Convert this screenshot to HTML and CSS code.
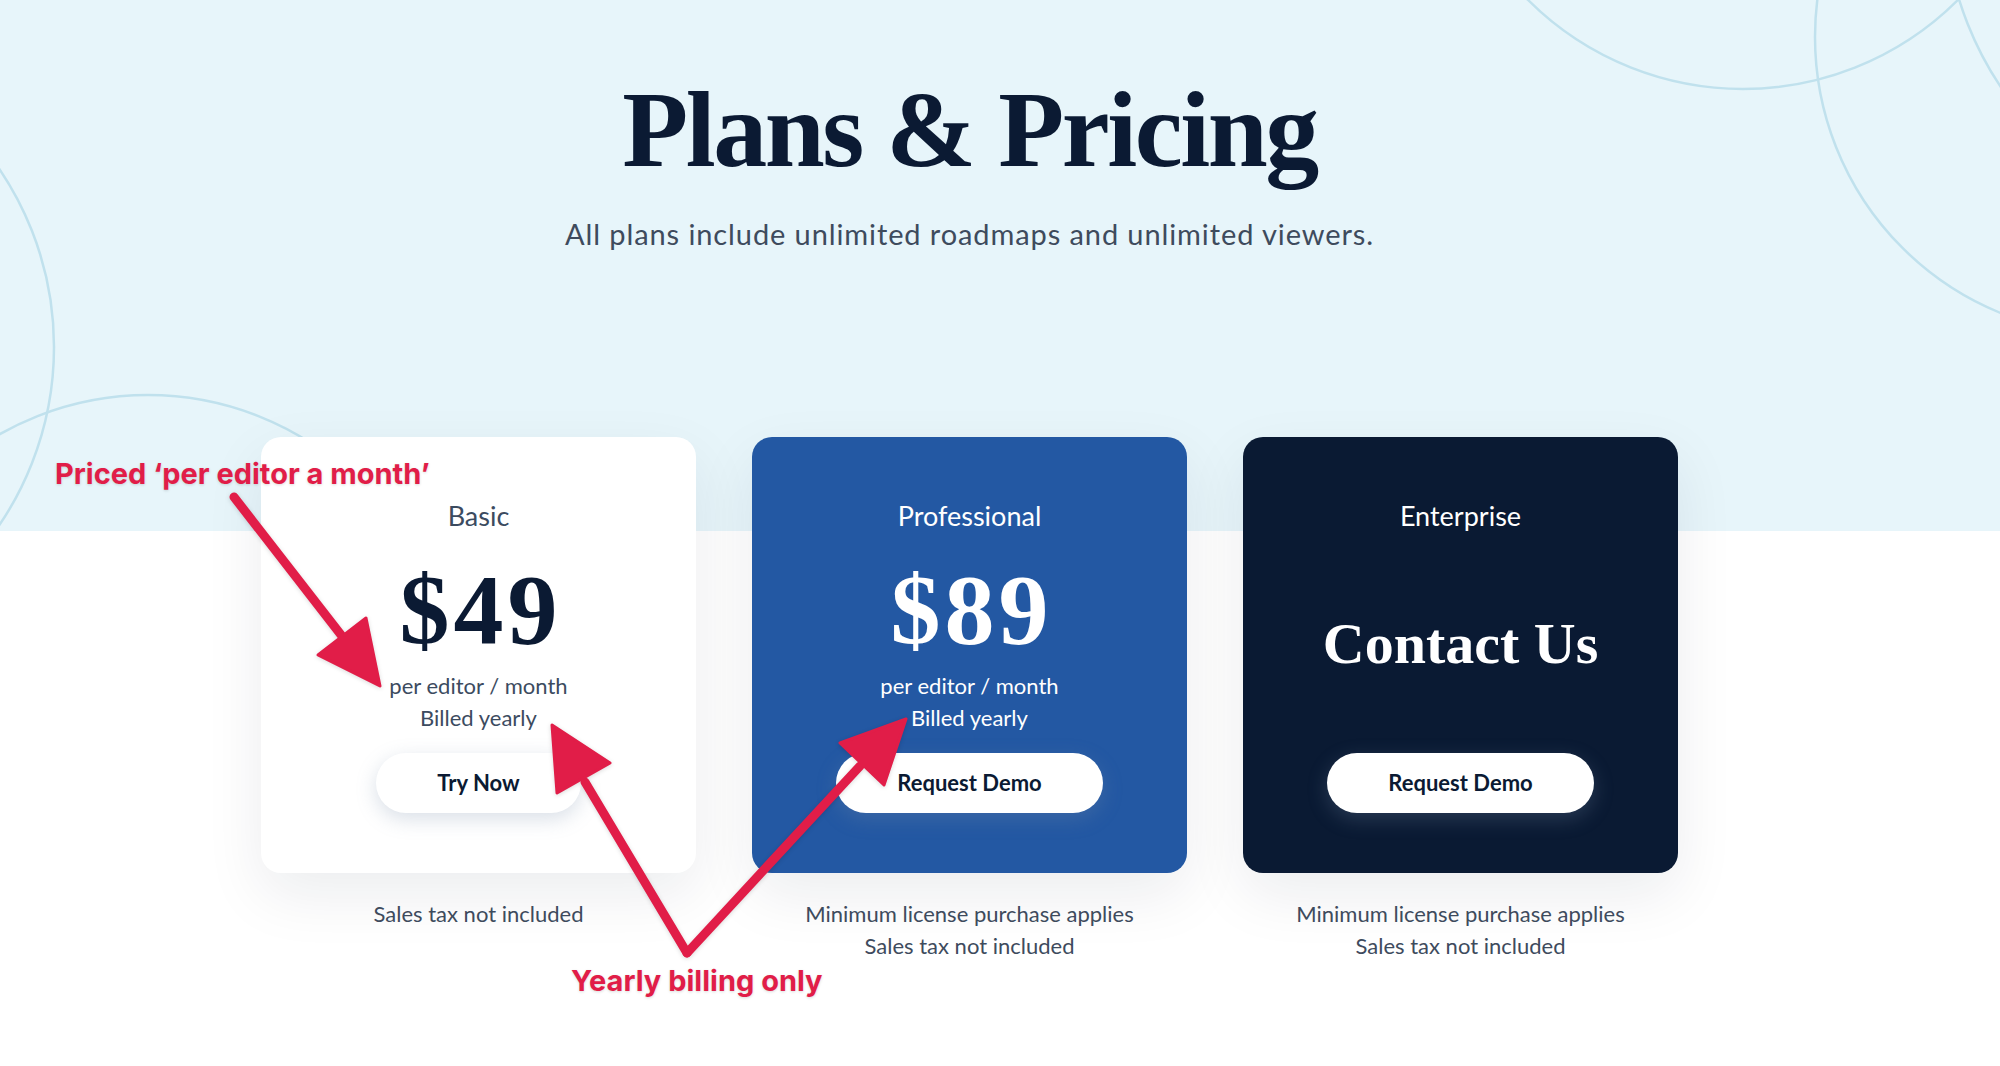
FILE: index.html
```html
<!DOCTYPE html>
<html lang="en">
<head>
    <meta charset="UTF-8">
    <meta name="viewport" content="width=device-width, initial-scale=1.0">
    <title>Plans &amp; Pricing</title>
    <link rel="stylesheet" href="styles.css">
</head>
<body>

    <main class="pricing">
        <!-- decorative rings behind the header -->
        <svg class="rings" width="2000" height="531" viewBox="0 0 2000 531" aria-hidden="true">
            <circle cx="1743" cy="-215" r="304"/>
            <circle cx="2113" cy="37" r="298"/>
            <circle cx="2280" cy="-100" r="336"/>
            <circle cx="-263" cy="347" r="317"/>
            <circle cx="148" cy="695" r="300"/>
        </svg>

        <header class="intro">
            <h1>Plans &amp; Pricing</h1>
            <p class="lead">All plans include unlimited roadmaps and unlimited viewers.</p>
        </header>

        <section class="plans">
            <div class="plan">
                <div class="card card-light">
                    <div class="plan-name">Basic</div>
                    <div class="price-block">
                        <div class="price">$49</div>
                        <div class="price-note">per editor / month<br>Billed yearly</div>
                    </div>
                    <button class="btn">Try Now</button>
                </div>
                <p class="fine-print">Sales tax not included</p>
            </div>

            <div class="plan">
                <div class="card card-blue">
                    <div class="plan-name">Professional</div>
                    <div class="price-block">
                        <div class="price">$89</div>
                        <div class="price-note">per editor / month<br>Billed yearly</div>
                    </div>
                    <button class="btn">Request Demo</button>
                </div>
                <p class="fine-print">Minimum license purchase applies<br>Sales tax not included</p>
            </div>

            <div class="plan">
                <div class="card card-dark">
                    <div class="plan-name">Enterprise</div>
                    <div class="price-block contact">
                        <div class="contact-us">Contact Us</div>
                    </div>
                    <button class="btn">Request Demo</button>
                </div>
                <p class="fine-print">Minimum license purchase applies<br>Sales tax not included</p>
            </div>
        </section>

        <!-- red call-outs drawn over the page -->
        <div class="notes">
            <svg class="arrows" width="2000" height="1066" viewBox="0 0 2000 1066" aria-hidden="true">
                <line x1="234" y1="497" x2="345" y2="640"/>
                <polygon points="380,686 318,655 366,618"/>
                <line x1="687" y1="953" x2="585" y2="782"/>
                <polygon points="552,725 610,763 557,793"/>
                <line x1="687" y1="953" x2="860" y2="766"/>
                <polygon points="906,719 840,743 884,785"/>
            </svg>
            <span class="note note-price">Priced ‘per editor a month’</span>
            <span class="note note-billing">Yearly billing only</span>
        </div>
    </main>

</body>
</html>
```

FILE: styles.css
```css
*, *::before, *::after {
  box-sizing: border-box;
}

body {
  margin: 0;
  background-color: #fff;
  color: #0b1a33;
  font-family: 'Lato', 'Noto Sans', sans-serif;
}

.pricing {
  position: relative;
  min-height: 1066px;
  padding-right: 61px;
  overflow: hidden;
  background: linear-gradient(to bottom, #e7f5fa 531px, #fff 531px);
}

.rings {
  position: absolute;
  top: 0;
  left: 0;
}

.rings circle {
  fill: none;
  stroke: #c0e1ed;
  stroke-width: 2.5;
}

.intro {
  position: relative;
  padding-top: 76px;
  text-align: center;
}

h1 {
  margin: 0;
  font: 700 108px/108px 'Liberation Serif', serif;
  letter-spacing: -2.5px;
  color: #0b1a33;
}

.lead {
  margin: 33px 0 0;
  font-size: 29px;
  line-height: 34px;
  letter-spacing: 0.9px;
  color: #3e4b5d;
}

.plans {
  position: relative;
  display: flex;
  justify-content: center;
  gap: 56px;
  margin-top: 186px;
}

.plan {
  width: 435px;
  text-align: center;
}

.card {
  display: flex;
  flex-direction: column;
  align-items: center;
  height: 436px;
  padding: 62px 0 60px;
  border-radius: 20px;
  box-shadow: 0 22px 60px rgba(11, 26, 51, 0.08);
}

.card-light {
  background-color: #fff;
  color: #3c4b5f;
}

.card-blue {
  background-color: #2358a3;
  color: #fff;
}

.card-dark {
  background-color: #0a1a33;
  color: #fff;
}

.plan-name {
  font-size: 27px;
  line-height: 34px;
}

.price-block {
  display: flex;
  flex-direction: column;
  align-items: center;
  height: 173px;
  margin-top: 28px;
}

.price-block.contact {
  justify-content: center;
  padding-bottom: 8px;
}

.price {
  margin-right: -4px;
  font: 700 100px/98px 'Liberation Serif', serif;
  letter-spacing: 4px;
}

.card-light .price {
  color: #0b1a33;
}

.price-note {
  margin-top: 11px;
  font-size: 22px;
  line-height: 32px;
}

.contact-us {
  font: 700 58px/58px 'Liberation Serif', serif;
}

.btn {
  height: 60px;
  margin-top: 19px;
  padding: 0 61px;
  border: none;
  border-radius: 30px;
  background-color: #fff;
  color: #0b1a33;
  font: 700 22px/60px 'Lato', sans-serif;
  box-shadow: 0 6px 20px rgba(120, 140, 170, 0.28);
  cursor: pointer;
  appearance: none;
}

.fine-print {
  margin: 25px 0 0;
  font-size: 22px;
  line-height: 32px;
  color: #3e4b5d;
}

.notes {
  position: absolute;
  top: 0;
  left: 0;
  width: 2000px;
  height: 1066px;
  pointer-events: none;
}

.arrows {
  position: absolute;
  top: 0;
  left: 0;
  filter: drop-shadow(0 1px 2px rgba(0, 0, 0, 0.15));
}

.arrows line {
  stroke: #e11d48;
  stroke-width: 9;
  stroke-linecap: round;
}

.arrows polygon {
  fill: #e11d48;
  stroke: #e11d48;
  stroke-width: 3;
  stroke-linejoin: round;
}

.note {
  position: absolute;
  font: 700 29px/35px 'Inter', sans-serif;
  color: #e11d48;
  white-space: nowrap;
  text-shadow: 0 1px 3px rgba(0, 0, 0, 0.15);
}

.note-price {
  top: 456px;
  left: 55px;
}

.note-billing {
  top: 963px;
  left: 571px;
}
```
